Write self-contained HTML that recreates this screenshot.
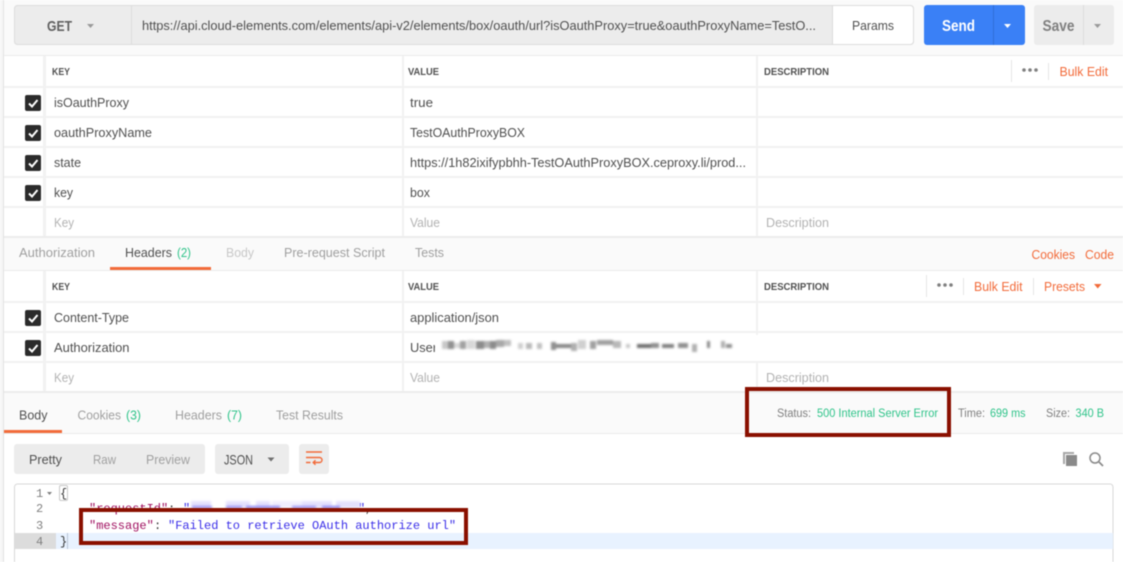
<!DOCTYPE html>
<html><head><meta charset="utf-8"><title>Postman</title>
<style>
html,body{margin:0;padding:0;background:#fff;width:1123px;height:562px;overflow:hidden}
svg{display:block;filter:blur(.45px)}
text{font-family:"Liberation Sans",sans-serif;font-size:13px;fill:#505050}
.h{font-size:10.5px;font-weight:bold;fill:#505050}
.ph{fill:#b3b3b3}
.tab{fill:#a0a0a0}
.dim{fill:#c8c8c8}
.or{fill:#f26b3a}
.gr{fill:#2fc48a}
.st{font-size:11.500px;fill:#808080}
.sg{font-size:11.500px;fill:#2fc48a}
.m{font-family:"Liberation Mono",monospace;font-size:12px}
.l{fill:#f2f2f2}
</style></head><body>
<svg width="1123" height="562" viewBox="0 0 1123 562" xmlns="http://www.w3.org/2000/svg">
<rect width="1123" height="562" fill="#fff"/>
<rect width="1123" height="55" fill="#fafafa"/>

<!-- URL bar -->
<rect x="14.5" y="5.5" width="899" height="39" rx="3" fill="#ececec" stroke="#dcdcdc"/>
<rect x="131" y="6" width="1" height="38" fill="#dcdcdc"/>
<path d="M832.5 6H910a3 3 0 0 1 3 3v32a3 3 0 0 1-3 3H832.5z" fill="#fff"/>
<rect x="832" y="6" width="1" height="38" fill="#dcdcdc"/>
<text x="47" y="31" style="font-size:15px;font-weight:bold;fill:#606060" textLength="25" lengthAdjust="spacingAndGlyphs">GET</text>
<path d="M87 24h7l-3.5 4z" fill="#9a9a9a"/>
<text x="142" y="30" textLength="674" lengthAdjust="spacingAndGlyphs">https://api.cloud-elements.com/elements/api-v2/elements/box/oauth/url?isOauthProxy=true&amp;oauthProxyName=TestO...</text>
<text x="852" y="30" textLength="42" lengthAdjust="spacingAndGlyphs">Params</text>
<rect x="924" y="5" width="101" height="40" rx="3" fill="#3a80f6"/>
<rect x="993" y="5" width="1" height="40" fill="#2f6fd8"/>
<text x="942" y="31" style="font-size:15.500px;font-weight:bold;fill:#fff" textLength="33" lengthAdjust="spacingAndGlyphs">Send</text>
<path d="M1004 24h7l-3.5 4z" fill="#fff"/>
<rect x="1034" y="5" width="80" height="40" rx="3" fill="#ececec"/>
<rect x="1083" y="5" width="1" height="40" fill="#dcdcdc"/>
<text x="1042.5" y="31" style="font-size:15.500px;font-weight:bold;fill:#808080" textLength="32" lengthAdjust="spacingAndGlyphs">Save</text>
<path d="M1094 24h7l-3.5 4z" fill="#9a9a9a"/>

<!-- Params table -->
<rect x="4" y="55" width="1119" height="1" fill="#ececec"/>
<rect x="4" y="86" width="1119" height="2" class="l"/>
<rect x="4" y="116" width="1119" height="2" class="l"/>
<rect x="4" y="146" width="1119" height="2" class="l"/>
<rect x="4" y="176" width="1119" height="2" class="l"/>
<rect x="4" y="206" width="1119" height="2" class="l"/>
<rect x="4" y="236" width="1119" height="2" fill="#ececec"/>
<rect x="43" y="56" width="3" height="180" class="l"/>
<rect x="402" y="56" width="2" height="180" class="l"/>
<rect x="756" y="56" width="2" height="180" class="l"/>
<text x="52" y="75" class="h" textLength="18" lengthAdjust="spacingAndGlyphs">KEY</text>
<text x="408" y="75" class="h" textLength="31" lengthAdjust="spacingAndGlyphs">VALUE</text>
<text x="764" y="75" class="h" textLength="65" lengthAdjust="spacingAndGlyphs">DESCRIPTION</text>
<rect x="1011" y="60" width="1" height="22" fill="#e6e6e6"/>
<rect x="1048" y="63" width="1" height="17" fill="#e6e6e6"/>
<g fill="#808080"><circle cx="1024" cy="70" r="1.8"/><circle cx="1030" cy="70" r="1.8"/><circle cx="1036" cy="70" r="1.8"/></g>
<text x="1059.5" y="76" class="or" textLength="48.5" lengthAdjust="spacingAndGlyphs">Bulk Edit</text>

<text x="54" y="107" textLength="75" lengthAdjust="spacingAndGlyphs">isOauthProxy</text>
<text x="54" y="137" textLength="98" lengthAdjust="spacingAndGlyphs">oauthProxyName</text>
<text x="54" y="167" textLength="27" lengthAdjust="spacingAndGlyphs">state</text>
<text x="54" y="197" textLength="19" lengthAdjust="spacingAndGlyphs">key</text>
<text x="54" y="227" class="ph" textLength="20" lengthAdjust="spacingAndGlyphs">Key</text>
<text x="410" y="107" textLength="23" lengthAdjust="spacingAndGlyphs">true</text>
<text x="410" y="137" textLength="115" lengthAdjust="spacingAndGlyphs">TestOAuthProxyBOX</text>
<text x="410" y="167" textLength="336" lengthAdjust="spacingAndGlyphs">https://1h82ixifypbhh-TestOAuthProxyBOX.ceproxy.li/prod...</text>
<text x="410" y="197" textLength="20" lengthAdjust="spacingAndGlyphs">box</text>
<text x="410" y="227" class="ph" textLength="30" lengthAdjust="spacingAndGlyphs">Value</text>
<text x="766" y="227" class="ph" textLength="63" lengthAdjust="spacingAndGlyphs">Description</text>

<g>
<rect x="25" y="95" width="16" height="16" rx="2" fill="#2b2b2b"/><path d="M29 103.5l3 3 5.5-6.5" stroke="#fff" stroke-width="2" fill="none"/>
<rect x="25" y="125" width="16" height="16" rx="2" fill="#2b2b2b"/><path d="M29 133.5l3 3 5.5-6.5" stroke="#fff" stroke-width="2" fill="none"/>
<rect x="25" y="155" width="16" height="16" rx="2" fill="#2b2b2b"/><path d="M29 163.5l3 3 5.5-6.5" stroke="#fff" stroke-width="2" fill="none"/>
<rect x="25" y="185" width="16" height="16" rx="2" fill="#2b2b2b"/><path d="M29 193.5l3 3 5.5-6.5" stroke="#fff" stroke-width="2" fill="none"/>
<rect x="25" y="310" width="16" height="16" rx="2" fill="#2b2b2b"/><path d="M29 318.5l3 3 5.5-6.5" stroke="#fff" stroke-width="2" fill="none"/>
<rect x="25" y="340" width="16" height="16" rx="2" fill="#2b2b2b"/><path d="M29 348.5l3 3 5.5-6.5" stroke="#fff" stroke-width="2" fill="none"/>
</g>

<!-- Request tabs -->
<rect x="4" y="238" width="1119" height="32" fill="#fafafa"/>
<rect x="4" y="270" width="1119" height="1" fill="#ececec"/>
<text x="19" y="257" class="tab" textLength="76" lengthAdjust="spacingAndGlyphs">Authorization</text>
<text x="125" y="257" textLength="47" lengthAdjust="spacingAndGlyphs">Headers</text>
<text x="177" y="257" class="gr" textLength="14" lengthAdjust="spacingAndGlyphs">(2)</text>
<text x="226" y="257" class="dim" textLength="28" lengthAdjust="spacingAndGlyphs">Body</text>
<text x="284" y="257" class="tab" textLength="101" lengthAdjust="spacingAndGlyphs">Pre-request Script</text>
<text x="415" y="257" class="tab" textLength="29" lengthAdjust="spacingAndGlyphs">Tests</text>
<rect x="110" y="267" width="101" height="3" fill="#f26b3a"/>
<text x="1031.5" y="259" class="or" textLength="43.5" lengthAdjust="spacingAndGlyphs">Cookies</text>
<text x="1085" y="259" class="or" textLength="29" lengthAdjust="spacingAndGlyphs">Code</text>

<!-- Headers table -->
<rect x="4" y="301" width="1119" height="2" class="l"/>
<rect x="4" y="331" width="1119" height="2" class="l"/>
<rect x="4" y="361" width="1119" height="2" class="l"/>
<rect x="4" y="391" width="1119" height="2" fill="#ececec"/>
<rect x="43" y="271" width="3" height="120" class="l"/>
<rect x="402" y="271" width="2" height="120" class="l"/>
<rect x="756" y="271" width="2" height="120" class="l"/>
<text x="52" y="290" class="h" textLength="18" lengthAdjust="spacingAndGlyphs">KEY</text>
<text x="408" y="290" class="h" textLength="31" lengthAdjust="spacingAndGlyphs">VALUE</text>
<text x="764" y="290" class="h" textLength="65" lengthAdjust="spacingAndGlyphs">DESCRIPTION</text>
<rect x="926" y="275" width="1" height="22" fill="#e6e6e6"/>
<rect x="963" y="278" width="1" height="17" fill="#e6e6e6"/>
<rect x="1033" y="278" width="1" height="17" fill="#e6e6e6"/>
<g fill="#808080"><circle cx="939" cy="285" r="1.8"/><circle cx="945" cy="285" r="1.8"/><circle cx="951" cy="285" r="1.8"/></g>
<text x="974" y="291" class="or" textLength="48.5" lengthAdjust="spacingAndGlyphs">Bulk Edit</text>
<text x="1044" y="291" class="or" textLength="41" lengthAdjust="spacingAndGlyphs">Presets</text>
<path d="M1094 284h7.5l-3.75 4.5z" fill="#f26b3a"/>
<text x="54" y="322" textLength="75" lengthAdjust="spacingAndGlyphs">Content-Type</text>
<text x="54" y="352" textLength="75.5" lengthAdjust="spacingAndGlyphs">Authorization</text>
<text x="54" y="382" class="ph" textLength="20" lengthAdjust="spacingAndGlyphs">Key</text>
<text x="410" y="322" textLength="89" lengthAdjust="spacingAndGlyphs">application/json</text>
<text x="410" y="352" textLength="27" lengthAdjust="spacingAndGlyphs">User</text>
<text x="410" y="382" class="ph" textLength="30" lengthAdjust="spacingAndGlyphs">Value</text>
<text x="766" y="382" class="ph" textLength="63" lengthAdjust="spacingAndGlyphs">Description</text>

<!-- Redacted header value -->
<rect x="435" y="335" width="329" height="26" fill="#fff"/>
<g style="filter:blur(1px)">
<rect x="442" y="341" width="6" height="8" fill="#c8c8c8"/><rect x="448" y="341" width="6" height="8" fill="#909090"/><rect x="454" y="343" width="6" height="5" fill="#d8d8d8"/><rect x="460" y="341" width="6" height="8" fill="#a0a0a0"/><rect x="467" y="340" width="8" height="9" fill="#d8d8d8"/><rect x="476" y="341" width="8" height="8" fill="#8c8c8c"/><rect x="484" y="341" width="6" height="7" fill="#b0b0b0"/><rect x="490" y="341" width="6" height="8" fill="#8c8c8c"/><rect x="496" y="340" width="8" height="7" fill="#a8a8a8"/><rect x="504" y="340" width="7" height="6" fill="#c0c0c0"/>
<rect x="518" y="343" width="5" height="6" fill="#d0d0d0"/><rect x="526" y="343" width="6" height="6" fill="#b8b8b8"/><rect x="537" y="343" width="5" height="6" fill="#c0c0c0"/><rect x="551" y="342" width="5" height="8" fill="#909090"/><rect x="556" y="344" width="15" height="4" fill="#888"/><rect x="571" y="343" width="6" height="8" fill="#b0b0b0"/><rect x="578" y="340" width="8" height="9" fill="#d0d0d0"/><rect x="590" y="341" width="6" height="8" fill="#a0a0a0"/><rect x="597" y="340" width="16" height="5" fill="#a0a0a0"/><rect x="613" y="341" width="8" height="7" fill="#b8b8b8"/><rect x="626" y="344" width="4" height="4" fill="#c8c8c8"/>
<rect x="637" y="344" width="14" height="4" fill="#707070"/><rect x="651" y="343" width="8" height="5" fill="#909090"/><rect x="662" y="344" width="12" height="4" fill="#808080"/><rect x="678" y="343" width="10" height="5" fill="#909090"/><rect x="692" y="344" width="5" height="8" fill="#b0b0b0"/><rect x="707" y="341" width="3" height="7" fill="#888"/><rect x="721" y="341" width="4" height="7" fill="#b0b0b0"/><rect x="726" y="344" width="6" height="4" fill="#909090"/>
</g>

<!-- Response tabs -->
<rect x="4" y="393" width="1119" height="40" fill="#fafafa"/>
<rect x="4" y="433" width="1119" height="1" fill="#ececec"/>
<text x="19" y="419.500" textLength="28.5" lengthAdjust="spacingAndGlyphs">Body</text>
<text x="77.5" y="419.500" class="tab" textLength="43.5" lengthAdjust="spacingAndGlyphs">Cookies</text>
<text x="126" y="419.500" class="gr" textLength="15" lengthAdjust="spacingAndGlyphs">(3)</text>
<text x="175" y="419.500" class="tab" textLength="47" lengthAdjust="spacingAndGlyphs">Headers</text>
<text x="227" y="419.500" class="gr" textLength="15" lengthAdjust="spacingAndGlyphs">(7)</text>
<text x="276" y="419.500" class="tab" textLength="67" lengthAdjust="spacingAndGlyphs">Test Results</text>
<rect x="4" y="430" width="58" height="3" fill="#f26b3a"/>
<text x="777" y="417" class="st" textLength="34" lengthAdjust="spacingAndGlyphs">Status:</text>
<text x="817" y="417" class="sg" textLength="121" lengthAdjust="spacingAndGlyphs">500 Internal Server Error</text>
<text x="958" y="417" class="st" textLength="27" lengthAdjust="spacingAndGlyphs">Time:</text>
<text x="990" y="417" class="sg" textLength="35.5" lengthAdjust="spacingAndGlyphs">699 ms</text>
<text x="1046" y="417" class="st" textLength="24" lengthAdjust="spacingAndGlyphs">Size:</text>
<text x="1075.5" y="417" class="sg" textLength="28.5" lengthAdjust="spacingAndGlyphs">340 B</text>

<!-- Response toolbar -->
<rect x="14" y="444" width="191" height="30" rx="3" fill="#ececec"/>
<text x="29" y="464" textLength="33" lengthAdjust="spacingAndGlyphs">Pretty</text>
<text x="93" y="464" class="tab" textLength="23" lengthAdjust="spacingAndGlyphs">Raw</text>
<text x="146" y="464" class="tab" textLength="44" lengthAdjust="spacingAndGlyphs">Preview</text>
<rect x="215" y="444" width="74" height="30" rx="3" fill="#ececec"/>
<text x="224" y="464.500" style="font-size:14px" textLength="29" lengthAdjust="spacingAndGlyphs">JSON</text>
<path d="M267.5 457.500h7l-3.500 4z" fill="#707070"/>
<rect x="299" y="444" width="30" height="30" rx="3" fill="#ececec"/>
<path d="M306 452h16M306 457.500h13.500a2.500 2.500 0 0 1 0 5H313.500M315.500 460.300l-2.300 2.200 2.300 2.200M306 462.500h4.500" fill="none" stroke="#f26b3a" stroke-width="1.400"/>
<path d="M1063 452h11v2h-9v10h-2z" fill="#a8a8a8"/>
<rect x="1066" y="455" width="11" height="11" fill="#8a8a8a"/>
<circle cx="1095" cy="458" r="5" fill="none" stroke="#8a8a8a" stroke-width="1.500"/>
<path d="M1099 462l4 4" stroke="#8a8a8a" stroke-width="1.700"/>

<!-- Editor -->
<path d="M14.500 562V487a3 3 0 0 1 3-3H1110a3 3 0 0 1 3 3V562" fill="#fff" stroke="#d8d8d8"/>
<rect x="15" y="533" width="41" height="16" fill="#dcdcdc"/>
<rect x="56" y="533" width="1057" height="16" fill="#e8f2ff"/>
<text x="36" y="497" class="m" style="fill:#808080">1</text>
<text x="36" y="512" class="m" style="fill:#808080">2</text>
<text x="36" y="529" class="m" style="fill:#808080">3</text>
<text x="36" y="545" class="m" style="fill:#808080">4</text>
<path d="M47 492h5l-2.500 3z" fill="#808080"/>
<rect x="59.500" y="485.500" width="8" height="15" rx="1.500" fill="none" stroke="#c8c8c8"/>
<text x="60" y="497" class="m" style="fill:#333">{</text>
<text x="60" y="545" class="m" style="fill:#333">}</text>
<rect x="67" y="533" width="1" height="16" fill="#b8c4d4"/>
<text x="89" y="512" class="m" style="fill:#a01060">"requestId"</text>
<text x="168" y="512" class="m" style="fill:#333">:</text>
<text x="183" y="512" class="m" style="fill:#3a2ee8">"</text>
<text x="358" y="512" class="m" style="fill:#3a2ee8">"</text>
<text x="365" y="512" class="m" style="fill:#333">,</text>
<g style="filter:blur(1px)">
<rect x="191" y="501" width="20" height="7" fill="#e4e0fd"/><rect x="226" y="501" width="24" height="7" fill="#e4e0fd"/><rect x="256" y="501" width="14" height="7" fill="#e4e0fd"/><rect x="272" y="501" width="30" height="7" fill="#f0eefe"/><rect x="302" y="501" width="30" height="7" fill="#e4e0fd"/><rect x="336" y="501" width="24" height="7" fill="#e4e0fd"/>
<rect x="192" y="506" width="20" height="2" fill="#8c84f2"/><rect x="226" y="506" width="16" height="2" fill="#8c84f2"/><rect x="246" y="506" width="34" height="2" fill="#7c74f0"/><rect x="292" y="506" width="24" height="2" fill="#8c84f2"/><rect x="322" y="506" width="18" height="2" fill="#7c74f0"/>
</g>
<text x="89" y="529" class="m" style="fill:#a01060">"message"</text>
<text x="154" y="529" class="m" style="fill:#333">:</text>
<text x="168" y="529" class="m" style="fill:#3a2ee8">"Failed to retrieve OAuth authorize url"</text>

<!-- Left strip -->
<rect x="0" y="0" width="4" height="562" fill="#f6f6f6"/>
<rect x="3" y="0" width="1" height="562" fill="#e2e2e2"/>

<!-- Annotation boxes -->
<rect x="747" y="389" width="202" height="46" fill="none" stroke="#8a1000" stroke-width="4"/>
<rect x="81" y="510" width="385" height="33" fill="none" stroke="#8a1000" stroke-width="4"/>
</svg>
</body></html>
